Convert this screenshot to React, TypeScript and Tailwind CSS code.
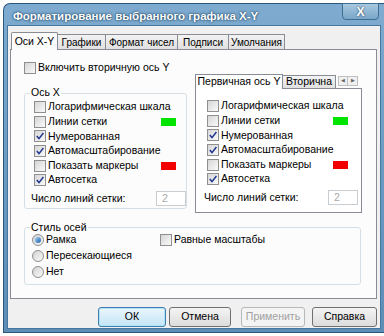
import React from "react";

function Check({ on }: { on?: boolean }) {
  return (
    <span className="inline-flex w-[12px] h-[12px] shrink-0 items-center justify-center border border-[#8f8f8f] bg-gradient-to-br from-[#d6d6d6] to-[#fafafa]">
      {on && (
        <svg width="8" height="8" viewBox="0 0 8 8">
          <path d="M0.8 4 L3 6.6 L7.4 1" fill="none" stroke="#1f3590" strokeWidth="1.5" />
        </svg>
      )}
    </span>
  );
}

function Radio({ on }: { on?: boolean }) {
  return (
    <span className="inline-flex w-[12px] h-[12px] shrink-0 items-center justify-center rounded-full border border-[#8f8f8f] bg-gradient-to-br from-[#d2d2d2] to-[#fafafa]">
      {on && <span className="w-[6px] h-[6px] rounded-full bg-gradient-to-br from-[#a4d6f5] to-[#1a5ba6]" />}
    </span>
  );
}

function Row({ label, on, color, swatchMr }: { label: string; on?: boolean; color?: string; swatchMr: string }) {
  return (
    <div className="flex items-center h-[14.6px] gap-[2px] whitespace-nowrap">
      <Check on={on} />
      <span className="flex-1">{label}</span>
      {color && <span className={"w-[15px] h-[8px] " + swatchMr + " " + color} />}
    </div>
  );
}

function AxisList({ swatchMr, inputMr }: { swatchMr: string; inputMr: string }) {
  return (
    <>
      <Row label="Логарифмическая шкала" swatchMr={swatchMr} />
      <Row label="Линии сетки" color="bg-[#00e400]" swatchMr={swatchMr} />
      <Row label="Нумерованная" on swatchMr={swatchMr} />
      <Row label="Автомасштабирование" on swatchMr={swatchMr} />
      <Row label="Показать маркеры" color="bg-[#f20000]" swatchMr={swatchMr} />
      <Row label="Автосетка" on swatchMr={swatchMr} />
      <div className="flex items-center justify-between h-[16px] mt-[3px] whitespace-nowrap">
        <span className="ml-[-3px]">Число линий сетки:</span>
        <span className={"w-[30px] h-[15px] border border-[#c8cdd2] bg-white text-[#a8a8a8] pl-[5px] leading-[13px] " + inputMr}>2</span>
      </div>
    </>
  );
}

export default function App() {
  const tabs = [
    { t: "Графики", w: "w-[48px]" },
    { t: "Формат чисел", w: "w-[72px]" },
    { t: "Подписи", w: "w-[51px]" },
    { t: "Умолчания", w: "w-[56px]" },
  ];
  return (
    <div className="w-[384px] h-[336px] bg-white pt-[3px] pl-[3px] text-[10.5px] text-black" style={{ fontFamily: "'Liberation Sans', Arial, sans-serif" }}>
      <div className="w-[381px] h-[330px] rounded-tl-[7px] border border-r-0 border-[#2c5679] bg-gradient-to-b from-[#7eabcf] via-[#6c9bc2] to-[#5d8eb8] flex flex-col pl-[3px] pr-[3px] pb-[3px]">
        {/* title bar */}
        <div className="h-[21px] flex items-start justify-between">
          <span className="mt-[4px] pl-[6px] text-white font-bold text-[11.5px] [text-shadow:0_0_3px_#173c5e,0_0_1px_#173c5e]">Форматирование выбранного графика X-Y</span>
          <span className="mt-[-1px] mr-[2px] w-[37px] h-[17px] rounded-b-[4px] border border-[#3d6f95] bg-gradient-to-b from-[#a9c9e0] to-[#79a6c9] flex items-center justify-center text-white font-bold text-[12px] [text-shadow:0_0_2px_#1c2c44]">X</span>
        </div>
        {/* body */}
        <div className="flex-1 border border-[#46779e] bg-[#f0f0f0] flex flex-col pl-[2px] pr-[3px] pt-[6px]">
          {/* tabs */}
          <div className="flex items-end h-[17px] pl-[1px] text-[10px]">
            <div className="w-[47px] h-[18px] border border-b-0 border-[#898c95] bg-[#fcfcfc] rounded-t-[2px] flex items-center justify-center z-10 mb-[-1px] text-[10.5px]">Оси X-Y</div>
            {tabs.map((x) => (
              <div key={x.t} className={"h-[15px] border border-l-0 border-b-0 border-[#898c95] bg-gradient-to-b from-[#f3f3f3] to-[#e0e0e0] flex items-center justify-center whitespace-nowrap " + x.w}>{x.t}</div>
            ))}
          </div>
          <div className="h-[250px] border border-[#898c95] bg-[#fcfcfc] pl-[13px] pt-[12px]">
            <div className="flex items-center gap-[2px] h-[12px]">
              <Check />
              <span>Включить вторичную ось Y</span>
            </div>
            <div className="flex items-start gap-[8px]">
              {/* Ось X */}
              <div className="w-[163px] h-[116px] mt-[19px] relative border border-[#d5dfe5] rounded-[3px] pl-[9px] pt-[6px] flex flex-col">
                <span className="absolute top-[-9px] left-[5px] bg-[#fcfcfc] px-[1px] leading-[14px]">Ось X</span>
                <AxisList swatchMr="mr-[10px]" inputMr="mr-[0px]" />
              </div>
              {/* Y tabs */}
              <div className="flex flex-col w-[167px]">
                <div className="flex items-end h-[14px]">
                  <div className="w-[88px] h-[15px] border border-b-0 border-[#898c95] bg-white flex items-center justify-center z-10 mb-[-1px] whitespace-nowrap">Первичная ось Y</div>
                  <div className="h-[13px] w-[53px] overflow-hidden border border-l-0 border-b-0 border-[#898c95] bg-gradient-to-b from-[#f3f3f3] to-[#e0e0e0] flex items-center">
                    <span className="block w-[48px] ml-[3px] overflow-hidden whitespace-nowrap">Вторична</span>
                  </div>
                  <div className="flex h-[10px] mb-[2px] ml-[2px]">
                    <span className="w-[10px] border border-[#c0c0c0] bg-[#f0f0f0] flex items-center justify-center text-[5px] text-[#666]">◀</span>
                    <span className="w-[10px] border border-l-0 border-[#c0c0c0] bg-[#f0f0f0] flex items-center justify-center text-[5px] text-[#666]">▶</span>
                  </div>
                </div>
                <div className="h-[125px] border border-[#898c95] bg-white pl-[11px] pt-[10px] flex flex-col">
                  <AxisList swatchMr="mr-[13px]" inputMr="mr-[3px]" />
                </div>
              </div>
            </div>
            {/* Стиль осей */}
            <div className="mt-[14px] h-[58px] w-[337px] relative border border-[#d5dfe5] rounded-[3px] pl-[7px] pt-[4px] flex">
              <span className="absolute top-[-8px] left-[5px] bg-[#fcfcfc] px-[1px] leading-[14px]">Стиль осей</span>
              <div className="flex flex-col w-[128px]">
                <div className="flex items-center gap-[2px] h-[16px]"><Radio on /><span>Рамка</span></div>
                <div className="flex items-center gap-[2px] h-[16px]"><Radio /><span>Пересекающиеся</span></div>
                <div className="flex items-center gap-[2px] h-[16px]"><Radio /><span>Нет</span></div>
              </div>
              <div className="flex items-center gap-[2px] h-[16px]"><Check /><span>Равные масштабы</span></div>
            </div>
          </div>
          {/* buttons */}
          <div className="flex justify-end mt-[8px]">
            <div className="w-[68px] h-[20px] rounded-[3px] border border-[#3c7fb1] bg-gradient-to-b from-[#eaf6fd] to-[#c4e5f6] flex items-center justify-center shadow-[inset_0_0_0_1px_#b6e2f8]">ОК</div>
            <div className="ml-[3px] w-[62px] h-[20px] rounded-[3px] border border-[#707070] bg-gradient-to-b from-[#f4f4f4] to-[#dcdcdc] flex items-center justify-center">Отмена</div>
            <div className="ml-[10px] w-[64px] h-[20px] rounded-[3px] border border-[#b5b9bc] bg-[#f4f4f4] text-[#a0a0a0] flex items-center justify-center">Применить</div>
            <div className="ml-[7px] w-[65px] h-[20px] rounded-[3px] border border-[#707070] bg-gradient-to-b from-[#f4f4f4] to-[#dcdcdc] flex items-center justify-center">Справка</div>
          </div>
        </div>
      </div>
    </div>
  );
}
